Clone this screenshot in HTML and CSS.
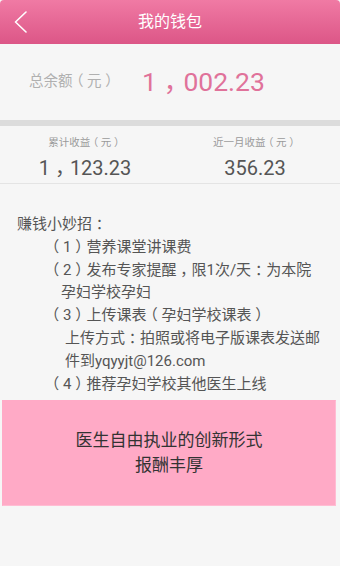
FILE: index.html
```html
<!DOCTYPE html>
<html lang="zh-CN">
<head>
<meta charset="utf-8">
<title>我的钱包</title>
<link rel="stylesheet" href="styles.css">
</head>
<body>
<div class="page">
  <header class="topbar">
    <div class="back">
      <svg width="14" height="22" viewBox="0 0 14 22"><polyline points="12,1 1.5,11 12,21" fill="none" stroke="#fff" stroke-width="1.6" stroke-linecap="round" stroke-linejoin="round"/></svg>
    </div>
    <h1 class="title">我的钱包</h1>
    <div class="spacer"></div>
  </header>

  <section class="balance">
    <span class="balance-label">总余额<span class="pc">（</span>元<span class="pc">）</span></span>
    <span class="balance-amount">1<span class="pc">，</span>002.23</span>
  </section>

  <div class="band"></div>

  <section class="stats">
    <div class="stat">
      <div class="stat-label">累计收益<span class="pc">（</span>元<span class="pc">）</span></div>
      <div class="stat-value">1<span class="pc">，</span>123.23</div>
    </div>
    <div class="stat">
      <div class="stat-label">近一月收益<span class="pc">（</span>元<span class="pc">）</span></div>
      <div class="stat-value">356.23</div>
    </div>
  </section>

  <section class="tips">
    <div class="tip-head">赚钱小妙招<span class="pc">：</span></div>
    <div class="tip"><span class="pc">（</span>1<span class="pc">）</span>营养课堂讲课费</div>
    <div class="tip"><span class="pc">（</span>2<span class="pc">）</span>发布专家提醒<span class="pc">，</span>限1次/天<span class="pc">：</span>为本院</div>
    <div class="tip tip-cont">孕妇学校孕妇</div>
    <div class="tip"><span class="pc">（</span>3<span class="pc">）</span>上传课表<span class="pc">（</span>孕妇学校课表<span class="pc">）</span></div>
    <div class="tip tip-sub">上传方式<span class="pc">：</span>拍照或将电子版课表发送邮</div>
    <div class="tip tip-sub">件到yqyyjt@126.com</div>
    <div class="tip"><span class="pc">（</span>4<span class="pc">）</span>推荐孕妇学校其他医生上线</div>
  </section>

  <section class="promo">
    <div>医生自由执业的创新形式</div>
    <div>报酬丰厚</div>
  </section>
</div>
</body>
</html>
```

FILE: styles.css
```css
html, body {
  margin: 0;
  padding: 0;
  background: #f6f6f6;
}

body {
  font-family: Roboto, "Noto Sans CJK SC", sans-serif;
  width: 340px;
  height: 566px;
  overflow: hidden;
}

/* full-width punctuation, ink centred in its em box */
.pc {
  font-feature-settings: "halt";
  padding: 0 0.25em;
}

.page {
  display: flex;
  flex-direction: column;
}

.topbar {
  height: 44px;
  display: grid;
  grid-template-columns: 44px 1fr 44px;
  align-items: center;
  background: linear-gradient(#f07aa4, #dc5687);
  border-radius: 4px 4px 0 0;
}

.back {
  display: flex;
  align-items: center;
  padding-left: 14px;
}

.back svg {
  display: block;
}

.title {
  margin: 0;
  text-align: center;
  color: #fff;
  font-size: 16px;
  font-weight: normal;
  line-height: 44px;
}

.balance {
  height: 76px;
  display: flex;
  align-items: center;
  padding-left: 29px;
  gap: 26px;
  white-space: nowrap;
}

.balance-label {
  font-size: 14.5px;
  color: #b0b0b0;
  line-height: 20px;
  flex-shrink: 0;
}

.balance-amount {
  font-size: 26.5px;
  color: #e0729a;
  line-height: 30px;
  flex-shrink: 0;
}

.band {
  height: 6px;
  background: #dcdcdc;
}

.stats {
  display: grid;
  grid-template-columns: 1fr 1fr;
  padding: 9px 0 6px;
  border-bottom: 1px solid #e4e4e4;
}

.stat {
  text-align: center;
  white-space: nowrap;
}

.stat-label {
  font-size: 10.5px;
  line-height: 16px;
  color: #9a9a9a;
}

.stat-value {
  margin-top: 8px;
  font-size: 20px;
  line-height: 18px;
  color: #555;
}

.tips {
  padding: 29px 0 0 17px;
  font-size: 15px;
  line-height: 22.8px;
  color: #555;
}

.tip {
  padding-left: 31px;
  white-space: nowrap;
}

.tip-cont {
  padding-left: 44px;
}

.tip-sub {
  padding-left: 48px;
}

.promo {
  margin: 5px 4px 0 2px;
  height: 104px;
  background: #ffaac6;
  border: 1px solid #ffbdd3;
  border-left-color: #ffaac6;
  border-top-color: #ffaac6;
  display: flex;
  flex-direction: column;
  justify-content: center;
  align-items: center;
  font-size: 17px;
  line-height: 25px;
  color: #333;
}
```
